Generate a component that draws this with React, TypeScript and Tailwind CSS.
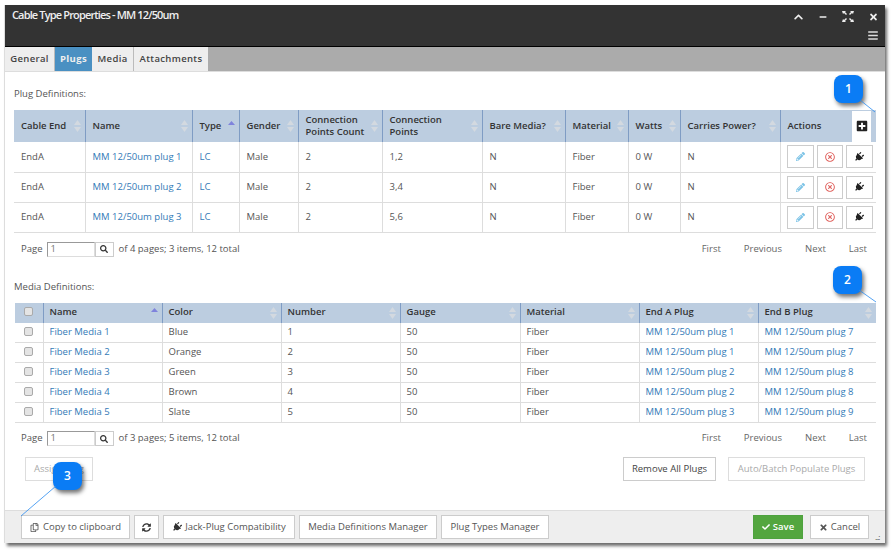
import React from 'react';
import {
  FaCheck,
  FaChevronUp,
  FaMinus,
  FaPencilAlt,
  FaPlug,
  FaPlusSquare,
  FaRegCopy,
  FaRegTimesCircle,
  FaSearch,
  FaSyncAlt,
  FaTimes,
  FaBars,
} from 'react-icons/fa';

const plugCols = [
  { label: 'Cable End', w: 'w-[71px]' },
  { label: 'Name', w: 'w-[107px]' },
  { label: 'Type', w: 'w-[47px]', sorted: true },
  { label: 'Gender', w: 'w-[59px]' },
  { label: 'Connection Points Count', w: 'w-[84px]' },
  { label: 'Connection Points', w: 'w-[100px]' },
  { label: 'Bare Media?', w: 'w-[83px]' },
  { label: 'Material', w: 'w-[63px]' },
  { label: 'Watts', w: 'w-[52px]' },
  { label: 'Carries Power?', w: 'w-[100px]' },
];

const plugRows = [
  { name: 'MM 12/50um plug 1', points: '1,2' },
  { name: 'MM 12/50um plug 2', points: '3,4' },
  { name: 'MM 12/50um plug 3', points: '5,6' },
];

const mediaCols = [
  { label: 'Name', w: 'w-[119px]', sorted: true },
  { label: 'Color', w: 'w-[119px]' },
  { label: 'Number', w: 'w-[119px]' },
  { label: 'Gauge', w: 'w-[120px]' },
  { label: 'Material', w: 'w-[119px]' },
  { label: 'End A Plug', w: 'w-[119px]' },
  { label: 'End B Plug', w: 'w-[118px]' },
];

const mediaRows = [
  { name: 'Fiber Media 1', color: 'Blue', num: '1', a: 'MM 12/50um plug 1', b: 'MM 12/50um plug 7' },
  { name: 'Fiber Media 2', color: 'Orange', num: '2', a: 'MM 12/50um plug 1', b: 'MM 12/50um plug 7' },
  { name: 'Fiber Media 3', color: 'Green', num: '3', a: 'MM 12/50um plug 2', b: 'MM 12/50um plug 8' },
  { name: 'Fiber Media 4', color: 'Brown', num: '4', a: 'MM 12/50um plug 2', b: 'MM 12/50um plug 8' },
  { name: 'Fiber Media 5', color: 'Slate', num: '5', a: 'MM 12/50um plug 3', b: 'MM 12/50um plug 9' },
];

const SortIcon = ({ active }: { active?: boolean }) => (
  <svg width="7" height="12" viewBox="0 0 7 12" className="absolute right-[4px] top-1/2 -translate-y-1/2">
    {active ? (
      <path d="M3.5 1 L7 5 L0 5 Z" fill="#7f83dc" />
    ) : (
      <>
        <path d="M3.5 0 L7 5 L0 5 Z" fill="#d3d9e0" />
        <path d="M3.5 12 L7 7 L0 7 Z" fill="#d3d9e0" />
      </>
    )}
  </svg>
);

const Th = ({ label, w, sorted }: { label: string; w: string; sorted?: boolean }) => (
  <th className={`${w} relative border-r border-[#7f9cc4] pl-[7px] pr-[12px] text-left align-middle font-semibold leading-[12px] text-[#333]`}>
    {label}
    <SortIcon active={sorted} />
  </th>
);

const Pager = ({ pages, items }: { pages: number; items: number }) => (
  <div className="flex items-center justify-between pl-[7px] pr-[9px] text-[9.5px] text-[#555]">
    <div className="flex items-center">
      <span>Page</span>
      <span className="ml-[4px] flex h-[15px] w-[48px] items-center border border-[#ddd] border-l-[#999] border-t-[#999] pl-[3px] text-[#777]">1</span>
      <span className="flex h-[15px] w-[19px] items-center justify-center border border-[#ccc] text-[#333]">
        <FaSearch className="h-[8px] w-[8px]" />
      </span>
      <span className="ml-[5px]">of {pages} pages; {items} items, 12 total</span>
    </div>
    <div className="flex gap-[23px] text-[#666]">
      <span>First</span>
      <span>Previous</span>
      <span>Next</span>
      <span>Last</span>
    </div>
  </div>
);

const Btn = ({ children, className = '' }: { children: React.ReactNode; className?: string }) => (
  <div className={`flex h-[24px] items-center justify-center gap-[3px] border text-[9.5px] ${className}`}>
    {children}
  </div>
);

const plainBtn = 'border-[#ccc] bg-white text-[#555]';

const ActionBtn = ({ children, className = '' }: { children: React.ReactNode; className?: string }) => (
  <span className={`flex h-[23px] items-center justify-center border border-[#ccc] bg-white ${className}`}>{children}</span>
);

const Bubble = ({ n, className }: { n: number; className: string }) => (
  <div className={`absolute flex h-[28px] w-[29px] items-center justify-center rounded-[8px] bg-[#0a7cf5] text-[12px] font-semibold text-white shadow-[2px_3px_4px_rgba(0,0,0,0.55)] ${className}`}>
    {n}
  </div>
);

const Check = () => (
  <span className="mx-auto -mt-[2px] block h-[9px] w-[9px] rounded-[2px] border border-[#aaa] bg-[#e4e4e4]" />
);

export default function App() {
  return (
    <div className="relative h-[553px] w-[894px] overflow-hidden bg-white p-[5px] font-['Open_Sans',sans-serif]">
      <div className="flex h-[538px] w-[880px] flex-col bg-white shadow-[-1px_0_0_#ddd,2px_3px_3px_rgba(60,60,60,0.75)]">
        {/* Title bar */}
        <div className="flex h-[42px] shrink-0 justify-between border-b border-black bg-[#333] pl-[7px] pr-[7px] pt-[2px] text-white">
          <div className="text-[11px] font-semibold tracking-[-0.85px] text-[#eee]">Cable Type Properties - MM 12/50um</div>
          <div className="flex flex-col items-end">
            <div className="flex items-center gap-[15px] pt-[4px]">
              <FaChevronUp className="h-[10px] w-[11px] text-[#eee]" />
              <FaMinus className="h-[8px] w-[8px] text-[#eee]" />
              <svg width="12" height="11" viewBox="0 0 12 11" fill="#eee">
                <path d="M0 0h4L3 1l2 2-1 1-2-2-1 1zM12 0H8l1 1-2 2 1 1 2-2 1 1zM0 11h4L3 10l2-2-1-1-2 2-1-1zM12 11H8l1-1-2-2 1-1 2 2 1-1z" />
              </svg>
              <FaTimes className="h-[10px] w-[9px] text-[#eee]" />
            </div>
            <FaBars className="mt-[8px] h-[11px] w-[10px] text-[#ddd]" />
          </div>
        </div>

        {/* Tabs */}
        <div className="flex h-[25px] shrink-0 border-b border-[#ddd] bg-[#ababab] text-[9.5px] font-semibold tracking-[0.35px] text-[#444]">
          <div className="flex w-[50px] items-center justify-center border-r border-[#bbb] bg-[#eee]">General</div>
          <div className="flex w-[37px] items-center justify-center bg-[#4a90c2] font-bold text-[#eee]">Plugs</div>
          <div className="flex w-[42px] items-center justify-center border-r border-[#bbb] bg-[#eee]">Media</div>
          <div className="flex w-[74px] items-center justify-center bg-[#eee]">Attachments</div>
        </div>

        {/* Content */}
        <div className="flex min-h-0 flex-1 flex-col px-[9px] text-[9.5px] text-[#555]">
          <div className="mt-[16px] h-[12px] leading-[12px]">Plug Definitions:</div>
          <table className="mt-[10px] w-[862px] table-fixed border-collapse">
            <thead>
              <tr className="h-[32px] bg-[#bccde0]">
                {plugCols.map((c) => (
                  <Th key={c.label} label={c.label} w={c.w} sorted={c.sorted} />
                ))}
                <th className="w-[96px] pl-[7px] text-left font-semibold text-[#333]">
                  <div className="flex items-center justify-between">
                    Actions
                    <span className="mr-[5px] flex h-[31px] w-[19px] items-center justify-center bg-white">
                      <FaPlusSquare className="h-[12px] w-[12px] text-[#222]" />
                    </span>
                  </div>
                </th>
              </tr>
            </thead>
            <tbody>
              {plugRows.map((r) => (
                <tr key={r.name} className="h-[30px] border-b border-[#ddd]">
                  <td className="border-r border-[#ddd] pl-[7px]">EndA</td>
                  <td className="border-r border-[#ddd] pl-[7px] text-[#337ab7]">{r.name}</td>
                  <td className="border-r border-[#ddd] pl-[7px] text-[#337ab7]">LC</td>
                  <td className="border-r border-[#ddd] pl-[7px]">Male</td>
                  <td className="border-r border-[#ddd] pl-[7px]">2</td>
                  <td className="border-r border-[#ddd] pl-[7px]">{r.points}</td>
                  <td className="border-r border-[#ddd] pl-[7px]">N</td>
                  <td className="border-r border-[#ddd] pl-[7px]">Fiber</td>
                  <td className="border-r border-[#ddd] pl-[7px]">0 W</td>
                  <td className="border-r border-[#ddd] pl-[7px]">N</td>
                  <td className="pl-[6px]">
                    <div className="flex gap-[3px]">
                      <ActionBtn className="w-[27px]"><FaPencilAlt className="h-[9px] w-[9px] text-[#7cc3e6]" /></ActionBtn>
                      <ActionBtn className="w-[26px]"><FaRegTimesCircle className="h-[10px] w-[10px] text-[#e0635f]" /></ActionBtn>
                      <ActionBtn className="w-[27px]"><FaPlug className="h-[10px] w-[10px] rotate-45 text-[#222]" /></ActionBtn>
                    </div>
                  </td>
                </tr>
              ))}
            </tbody>
          </table>

          <div className="mt-[9px]"><Pager pages={4} items={3} /></div>

          <div className="mt-[24px] h-[12px] leading-[12px]">Media Definitions:</div>
          <table className="ml-[1px] mt-[10px] w-[861px] table-fixed border-collapse">
            <thead>
              <tr className="h-[20px] bg-[#bccde0]">
                <th className="w-[28px] border-r border-[#7f9cc4] align-middle">
                  <Check />
                </th>
                {mediaCols.map((c, i) => (
                  <th key={c.label} className={`${c.w} relative pl-[6px] pr-[12px] text-left align-middle font-semibold text-[#333] ${i < 6 ? 'border-r border-[#7f9cc4]' : ''}`}>
                    {c.label}
                    <SortIcon active={c.sorted} />
                  </th>
                ))}
              </tr>
            </thead>
            <tbody>
              {mediaRows.map((r) => (
                <tr key={r.name} className="h-[20px] border-b border-[#ddd]">
                  <td className="border-r border-[#ddd]">
                    <Check />
                  </td>
                  <td className="border-r border-[#ddd] pl-[6px] text-[#337ab7]">{r.name}</td>
                  <td className="border-r border-[#ddd] pl-[6px]">{r.color}</td>
                  <td className="border-r border-[#ddd] pl-[6px]">{r.num}</td>
                  <td className="border-r border-[#ddd] pl-[6px]">50</td>
                  <td className="border-r border-[#ddd] pl-[6px]">Fiber</td>
                  <td className="border-r border-[#ddd] pl-[6px] text-[#337ab7]">{r.a}</td>
                  <td className="pl-[6px] text-[#337ab7]">{r.b}</td>
                </tr>
              ))}
            </tbody>
          </table>

          <div className="mt-[8px]"><Pager pages={3} items={5} /></div>

          <div className="mt-[11px] flex justify-between pl-[11px] pr-[11px]">
            <Btn className="w-[68px] border-[#ddd] bg-white text-[#aaa]">Assign Plug</Btn>
            <div className="flex gap-[12px]">
              <Btn className="w-[93px] border-[#ccc] bg-white text-[#444]">Remove All Plugs</Btn>
              <Btn className="w-[137px] border-[#ddd] bg-white text-[#aaa]">Auto/Batch Populate Plugs</Btn>
            </div>
          </div>
        </div>

        {/* Footer */}
        <div className="flex h-[33px] shrink-0 items-start justify-between border-t border-[#ddd] bg-[#eee] pl-[16px] pr-[16px] pt-[4px]">
          <div className="flex gap-[4px]">
            <Btn className={`w-[109px] ${plainBtn}`}><FaRegCopy className="mr-[1px] h-[9px] w-[9px]" />Copy to clipboard</Btn>
            <Btn className={`w-[25px] ${plainBtn}`}><FaSyncAlt className="h-[9px] w-[9px] text-[#333]" /></Btn>
            <Btn className={`w-[132px] ${plainBtn}`}><FaPlug className="h-[10px] w-[10px] rotate-45 text-[#333]" />Jack-Plug Compatibility</Btn>
            <Btn className={`w-[138px] ${plainBtn}`}>Media Definitions Manager</Btn>
            <Btn className={`w-[108px] ${plainBtn}`}>Plug Types Manager</Btn>
          </div>
          <div className="flex gap-[7px]">
            <Btn className="w-[50px] border-[#4ea23f] bg-[#53a63f] font-semibold text-white"><FaCheck className="h-[8px] w-[8px]" />Save</Btn>
            <Btn className={`w-[59px] ${plainBtn}`}><FaTimes className="h-[9px] w-[9px]" />Cancel</Btn>
          </div>
        </div>
      </div>

      {/* Callouts */}
      <Bubble n={1} className="left-[834px] top-[75px]" />
      <Bubble n={2} className="left-[833px] top-[266px]" />
      <Bubble n={3} className="left-[53px] top-[462px]" />
      <svg className="pointer-events-none absolute left-0 top-0" width="894" height="553">
        <line x1="860" y1="100" x2="875" y2="112" stroke="#2a8cf0" strokeWidth="0.8" />
        <line x1="859" y1="290" x2="876" y2="302" stroke="#2a8cf0" strokeWidth="0.8" />
        <line x1="56" y1="486" x2="21" y2="516" stroke="#2a8cf0" strokeWidth="0.8" />
      </svg>
      <div className="absolute left-[875px] top-[533px] text-[8px] leading-[8px] tracking-[-1px] text-[#555]">...:</div>
    </div>
  );
}
